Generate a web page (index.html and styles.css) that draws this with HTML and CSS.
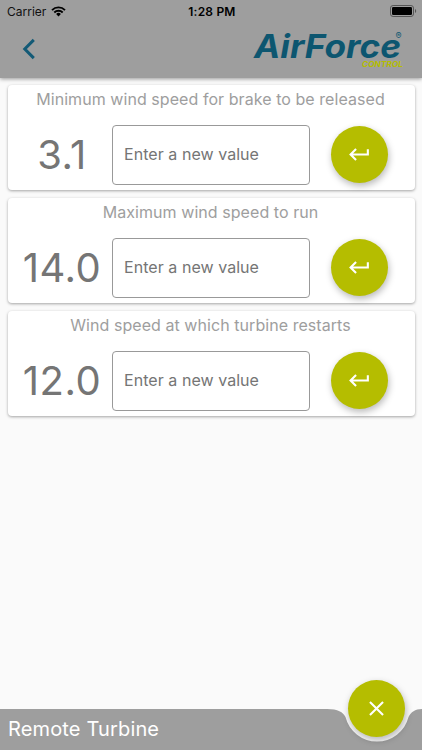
FILE: index.html
```html
<!DOCTYPE html>
<html lang="en">
<head>
  <meta charset="UTF-8">
  <meta name="viewport" content="width=device-width, initial-scale=1">
  <title>AirForce Control</title>
  <link rel="stylesheet" href="styles.css">
</head>
<body>

  <header class="header">
    <div class="status-bar">
      <div class="carrier">
        <span>Carrier</span>
        <svg width="15" height="11" viewBox="0 0 15 11">
          <path d="M1 4.1a9.2 9.2 0 0 1 13 0M3.3 6.5a5.9 5.9 0 0 1 8.4 0" fill="none" stroke="#000" stroke-width="1.9"/>
          <path d="M7.5 10.4L5.1 8a3.4 3.4 0 0 1 4.8 0z"/>
        </svg>
      </div>
      <div class="time">1:28 PM</div>
      <div class="battery">
        <svg width="27" height="12" viewBox="0 0 27 12">
          <rect x="0.5" y="0.5" width="23" height="11" rx="2.6" fill="none" stroke="#555"/>
          <rect x="2" y="2" width="20" height="8" rx="1.2"/>
          <path d="M25 4v4c1.6-.6 1.6-3.4 0-4z" fill="#555"/>
        </svg>
      </div>
    </div>
    <div class="toolbar">
      <svg class="back" width="14" height="22" viewBox="0 0 14 22">
        <path d="M11.8 1.9L2.8 11l9 9.1" fill="none" stroke="#135a76" stroke-width="3"/>
      </svg>
      <svg class="logo" width="154" height="44" viewBox="0 0 154 44">
        <text class="logo-name" x="3" y="30.500" textLength="147" lengthAdjust="spacingAndGlyphs">AirForce</text>
        <text class="logo-mark" x="144.500" y="11.500">®</text>
        <text class="logo-sub" x="111" y="39.500" textLength="41" lengthAdjust="spacingAndGlyphs">CONTROL</text>
      </svg>
    </div>
  </header>

  <main class="settings">
    <section class="card">
      <h2>Minimum wind speed for brake to be released</h2>
      <div class="row">
        <div class="value">3.1</div>
        <input type="text" placeholder="Enter a new value">
        <button class="round-button">
          <svg width="25" height="25" viewBox="0 0 24 24"><path d="M19 7v4H5.83l3.58-3.59L8 6l-6 6 6 6 1.41-1.41L5.83 13H21V7z"/></svg>
        </button>
      </div>
    </section>

    <section class="card">
      <h2>Maximum wind speed to run</h2>
      <div class="row">
        <div class="value">14.0</div>
        <input type="text" placeholder="Enter a new value">
        <button class="round-button">
          <svg width="25" height="25" viewBox="0 0 24 24"><path d="M19 7v4H5.83l3.58-3.59L8 6l-6 6 6 6 1.41-1.41L5.83 13H21V7z"/></svg>
        </button>
      </div>
    </section>

    <section class="card">
      <h2>Wind speed at which turbine restarts</h2>
      <div class="row">
        <div class="value">12.0</div>
        <input type="text" placeholder="Enter a new value">
        <button class="round-button">
          <svg width="25" height="25" viewBox="0 0 24 24"><path d="M19 7v4H5.83l3.58-3.59L8 6l-6 6 6 6 1.41-1.41L5.83 13H21V7z"/></svg>
        </button>
      </div>
    </section>
  </main>

  <footer class="bottom-bar">
    <!-- bar with a notch for the close button -->
    <svg class="bar-shape" width="422" height="41" viewBox="0 0 422 41">
      <path d="M0 0H327C338 0 343 3 345.500 8A32.500 32.500 0 0 0 377 32.500A32.500 32.500 0 0 0 408.500 8C411 3 415 0 422 0V41H0z" fill="#9e9e9e"/>
    </svg>
    <span class="bar-title">Remote Turbine</span>
    <button class="round-button close">
      <svg width="25" height="25" viewBox="0 0 24 24"><path d="M19 6.41L17.59 5 12 10.59 6.41 5 5 6.41 10.59 12 5 17.59 6.41 19 12 13.41 17.59 19 19 17.59 13.41 12z"/></svg>
    </button>
  </footer>

</body>
</html>
```
FILE: styles.css
```css
* {
  box-sizing: border-box;
}

body {
  margin: 0;
  height: 750px;
  display: flex;
  flex-direction: column;
  overflow: hidden;
  background-color: #fafafa;
  font-family: Inter, Roboto, sans-serif;
}

.header {
  height: 78px;
  background-color: #9e9e9e;
  box-shadow: 0 1px 4px rgba(0, 0, 0, 0.4);
}

.status-bar {
  display: grid;
  grid-template-columns: 1fr auto 1fr;
  align-items: center;
  height: 22px;
  padding: 0 5px 0 7px;
  font-size: 12px;
  color: #111;
}

.carrier {
  display: flex;
  align-items: center;
  gap: 5px;
}

.time {
  font-weight: 600;
  letter-spacing: 0.2px;
  color: #000;
}

.battery {
  display: flex;
  justify-content: flex-end;
}

.toolbar {
  display: flex;
  align-items: center;
  justify-content: space-between;
  height: 54px;
  padding: 0 17px 0 22px;
}

.logo {
  overflow: visible;
}

.logo-name {
  font: italic 700 32.5px Inter, sans-serif;
  fill: #0d5670;
}

.logo-mark {
  font: 9px Inter, sans-serif;
  fill: #0d5670;
}

.logo-sub {
  font: italic 700 8px Inter, sans-serif;
  fill: #b5bd00;
}

.settings {
  flex: 1;
  display: flex;
  flex-direction: column;
  gap: 8px;
  padding: 7px 7px 0 8px;
}

.card {
  height: 105px;
  background-color: #fff;
  border-radius: 4px;
  box-shadow: 0 1px 3px rgba(0, 0, 0, 0.35);
}

.card h2 {
  margin: 0;
  padding: 4px 2px 0 0;
  height: 40px;
  font-size: 16px;
  font-weight: 400;
  line-height: 20px;
  letter-spacing: 0.06px;
  text-align: center;
  color: #9e9e9e;
}

.row {
  display: flex;
  align-items: center;
  height: 59px;
}

.value {
  width: 104px;
  padding-left: 4px;
  font-size: 40px;
  letter-spacing: 0.5px;
  text-align: center;
  color: #757575;
}

.row input {
  width: 198px;
  height: 60px;
  padding: 0 11px 1px;
  border: 1px solid #999;
  border-radius: 4px;
  background: none;
  font-family: inherit;
  font-size: 16px;
  letter-spacing: 0.05px;
}

.row input::placeholder {
  color: #757575;
}

.round-button {
  display: flex;
  align-items: center;
  justify-content: center;
  width: 57px;
  height: 57px;
  margin-left: 21px;
  padding: 0;
  border: none;
  border-radius: 50%;
  background-color: #b5bd00;
  box-shadow: 1px 3px 7px rgba(0, 0, 0, 0.28);
}

.round-button svg {
  fill: #fff;
}

.bottom-bar {
  position: relative;
  height: 41px;
}

.bar-shape {
  position: absolute;
  top: 0;
  left: 0;
}

.bar-title {
  position: relative;
  display: block;
  padding-left: 8px;
  font-size: 20px;
  line-height: 41px;
  letter-spacing: 0.15px;
  color: #fff;
}

.close {
  position: absolute;
  top: -29px;
  right: 17px;
}
```
